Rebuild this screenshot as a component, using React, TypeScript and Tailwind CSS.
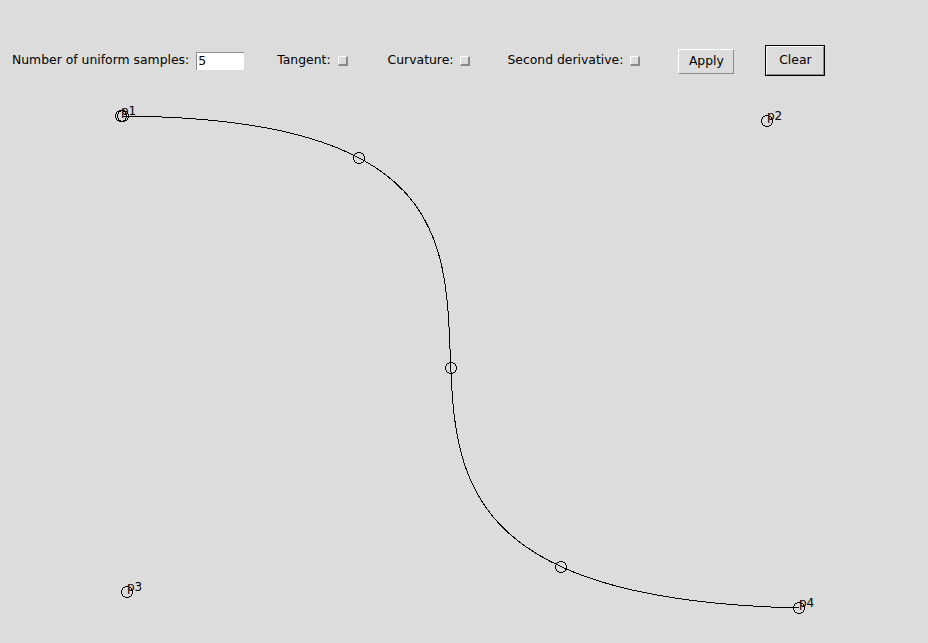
import React from "react";

function Check() {
  return (
    <span className="ml-[7px] inline-block h-[10px] w-[10px] border-t border-l border-t-white border-l-white border-r-2 border-b-2 border-r-[#8a8a8a] border-b-[#8a8a8a] bg-[#dcdcdc]" />
  );
}

export default function App() {
  const samples: [number, number][] = [
    [123, 116],
    [359, 158],
    [451, 368],
    [561, 567],
    [799, 608],
  ];
  const ctrls: { x: number; y: number; n: string }[] = [
    { x: 121, y: 116, n: "p1" },
    { x: 767, y: 121, n: "p2" },
    { x: 127, y: 592, n: "p3" },
    { x: 799, y: 608, n: "p4" },
  ];
  return (
    <div className="w-[928px] h-[643px] bg-[#dcdcdc] font-['DejaVu_Sans',sans-serif] text-black overflow-hidden flex flex-col">
      <div className="h-[90px] flex items-start pt-[45px] text-[12.4px] leading-none">
        <div className="flex items-center h-[31px] pl-[12px]">
          <span>Number of uniform samples:</span>
          <div className="ml-[7px] w-[48px] h-[18px] bg-white border-t border-l border-[#8a8a8a] border-r-white border-b-white flex items-center pl-[1px]">
            5
          </div>
          <span className="ml-[33px]">Tangent:</span>
          <Check />
          <span className="ml-[40px]">Curvature:</span>
          <Check />
          <span className="ml-[37px]">Second derivative:</span>
          <Check />
          <div className="ml-[38px] mt-[2px] w-[56px] h-[25px] border border-t-white border-l-white border-r-[#8a8a8a] border-b-[#8a8a8a] flex items-center justify-center">
            Apply
          </div>
          <div className="ml-[31px] w-[60px] h-[31px] border border-black p-0">
            <div className="w-full h-full border border-t-white border-l-white border-r-[#8a8a8a] border-b-[#8a8a8a] flex items-center justify-center">
              Clear
            </div>
          </div>
        </div>
      </div>
      <svg
        width={928}
        height={553}
        viewBox="0 90 928 553"
        className="block"
        shapeRendering="crispEdges"
      >
        <path
          d="M122 116 C767 121, 127 592, 799 608"
          fill="none"
          stroke="black"
          strokeWidth={1}
        />
        {samples.map(([x, y], i) => (
          <circle key={i} cx={x} cy={y} r={5.5} fill="none" stroke="black" strokeWidth={1} />
        ))}
        {ctrls.map((c) => (
          <g key={c.n}>
            <circle cx={c.x} cy={c.y} r={5.5} fill="none" stroke="black" strokeWidth={1} />
            <text x={c.x} y={c.y - 1} fontSize={12} fill="black" className="font-['DejaVu_Sans',sans-serif]">
              {c.n}
            </text>
          </g>
        ))}
      </svg>
    </div>
  );
}
